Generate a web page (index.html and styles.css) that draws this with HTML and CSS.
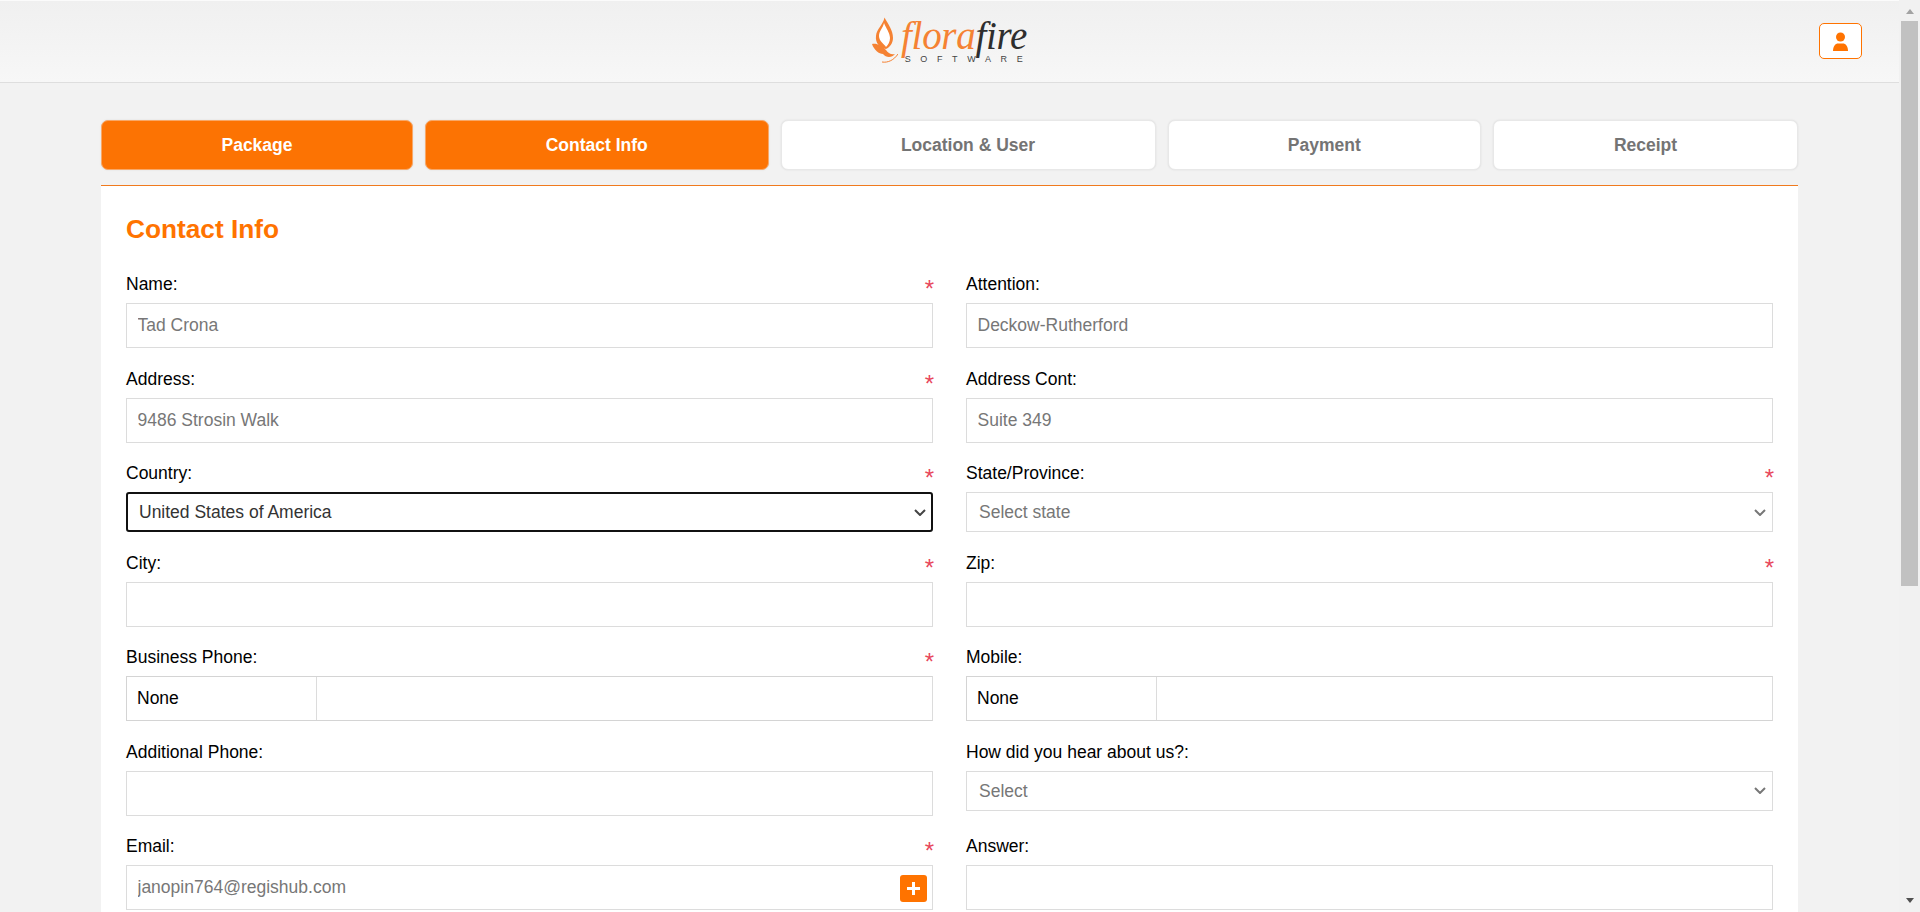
FILE: index.html
```html
<!DOCTYPE html>
<html>
<head>
<meta charset="utf-8" />
<title>Contact Info</title>
<link rel="stylesheet" href="styles.css">
</head>
<body>
<div class="page">
    <div class="header">
        <div class="logo">
            <svg class="flame" width="26" height="50" viewBox="0 0 26 50">
                <path fill="#f58233" d="M12.5 1.5C16 8 21 14 21 22C21 27 18 31 14 33C8 32 3 27 4 20C4.5 13 11 9 12.5 1.5Z" />
                <path fill="#fff" d="M12 7C14 12 18 17 18 22C18 26 16 29 14 31C12 28 7 25 7 20C7 15 11 12 12 7Z" />
                <path fill="#f58233" d="M0 28C5 27 10 30 14 34C16 37 19 39 23 38C20 42 14 42 11 38C7 38 2 34 0 28Z" />
                <path fill="none" stroke="#f58233" d="M10 46C16 47 22 44 26 38" />
            </svg>
            <div class="brand">
                <div class="brand-name"><span class="flora">flora</span><span class="fire">fire</span></div>
                <div class="brand-sub">SOFTWARE</div>
            </div>
        </div>
        <button class="user-btn" type="button">
            <svg width="17" height="19" viewBox="0 0 17 19">
                <circle cx="8.5" cy="5" r="4.5" fill="#ff7300" />
                <path fill="#ff7300" d="M1 19C1 14 3.5 11.5 6 11.5H11C13.5 11.5 16 14 16 19Z" />
            </svg>
        </button>
    </div>

    <div class="content">
        <div class="tabs">
            <div class="tab active">Package</div>
            <div class="tab active">Contact Info</div>
            <div class="tab">Location &amp; User</div>
            <div class="tab">Payment</div>
            <div class="tab">Receipt</div>
        </div>

        <div class="card">
            <h2 class="title">Contact Info</h2>
            <div class="form">
                <div class="field">
                    <div class="label"><span>Name:</span><span class="req">*</span></div>
                    <input class="input" type="text" value="Tad Crona">
                </div>
                <div class="field">
                    <div class="label"><span>Attention:</span></div>
                    <input class="input" type="text" value="Deckow-Rutherford">
                </div>
                <div class="field">
                    <div class="label"><span>Address:</span><span class="req">*</span></div>
                    <input class="input" type="text" value="9486 Strosin Walk">
                </div>
                <div class="field">
                    <div class="label"><span>Address Cont:</span></div>
                    <input class="input" type="text" value="Suite 349">
                </div>
                <div class="field">
                    <div class="label"><span>Country:</span><span class="req">*</span></div>
                    <select class="select focused"><option>United States of America</option></select>
                </div>
                <div class="field">
                    <div class="label"><span>State/Province:</span><span class="req">*</span></div>
                    <select class="select"><option>Select state</option></select>
                </div>
                <div class="field">
                    <div class="label"><span>City:</span><span class="req">*</span></div>
                    <input class="input" type="text">
                </div>
                <div class="field">
                    <div class="label"><span>Zip:</span><span class="req">*</span></div>
                    <input class="input" type="text">
                </div>
                <div class="field">
                    <div class="label"><span>Business Phone:</span><span class="req">*</span></div>
                    <div class="phone">
                        <div class="dial">None</div>
                        <input class="phone-num" type="text">
                    </div>
                </div>
                <div class="field">
                    <div class="label"><span>Mobile:</span></div>
                    <div class="phone">
                        <div class="dial">None</div>
                        <input class="phone-num" type="text">
                    </div>
                </div>
                <div class="field">
                    <div class="label"><span>Additional Phone:</span></div>
                    <input class="input" type="text">
                </div>
                <div class="field">
                    <div class="label"><span>How did you hear about us?:</span></div>
                    <select class="select"><option>Select</option></select>
                </div>
                <div class="field">
                    <div class="label"><span>Email:</span><span class="req">*</span></div>
                    <div class="email">
                        <input class="input" type="text" value="janopin764@regishub.com">
                        <div class="add-btn">
                            <svg width="13" height="13" viewBox="0 0 13 13">
                                <path fill="#fff" d="M5 0H8V5H13V8H8V13H5V8H0V5H5Z" />
                            </svg>
                        </div>
                    </div>
                </div>
                <div class="field">
                    <div class="label"><span>Answer:</span></div>
                    <input class="input" type="text">
                </div>
            </div>
        </div>
    </div>
</div>
<div class="scrollbar">
    <div class="arrow-up"></div>
    <div class="thumb"></div>
    <div class="arrow-down"></div>
</div>
</body>
</html>
```

FILE: styles.css
```css
*{ box-sizing:border-box; margin:0; padding:0; }
html,body{ height:100%; overflow:hidden; }
body{
    display:flex;
    background-color:#f2f2f2;
    font-family:"Liberation Sans", Arial, sans-serif;
    font-size:17.5px;
    color:#000;
}
.page{
    flex:1;
    min-width:0;
    height:912px;
    overflow:hidden;
}

/* header */
.header{
    height:83px;
    display:flex;
    justify-content:center;
    align-items:center;
    position:relative;
    background:linear-gradient(#f0f0f0, #f7f7f7);
    border-top:1px solid #fbfbfb;
    border-bottom:1px solid #dedede;
}
.logo{ display:flex; align-items:flex-start; margin-top:-2px; }
.flame{ margin-right:3px; margin-top:1px; }
.brand{ display:flex; flex-direction:column; align-items:center; }
.brand-name{
    font-family:"Liberation Serif", serif;
    font-style:italic;
    font-size:39px;
    line-height:42px;
    letter-spacing:-0.3px;
}
.flora{ color:#f58233; }
.fire{ color:#2e2e2e; }
.brand-sub{
    margin-top:-2px;
    font-size:9px;
    line-height:9px;
    letter-spacing:9.6px;
    margin-right:-9px;
    color:#444;
}
.user-btn{
    position:absolute;
    right:37px;
    top:22px;
    width:43px;
    height:36px;
    display:flex;
    align-items:center;
    justify-content:center;
    background:#fff;
    border:1px solid #ff7300;
    border-radius:5px;
}

/* tabs */
.content{ padding:37px 101px 0 101px; }
.tabs{
    display:grid;
    grid-template-columns:312px 343.5px 375px 313.5px 305px;
    column-gap:12px;
    height:50px;
}
.tab{
    display:flex;
    align-items:center;
    justify-content:center;
    background:#fff;
    border:1px solid #e8e8e8;
    border-radius:7px;
    box-shadow:0 0 2px rgba(0,0,0,0.1);
    font-size:17.5px;
    font-weight:bold;
    color:#747474;
}
.tab.active{
    background:#fc7303;
    border-color:#f8a868;
    color:#fff;
}

/* form */
.card{
    margin-top:15px;
    background:#fff;
    border-top:1px solid #f07a1e;
    padding:28px 25px 40px 25px;
}
.title{
    font-size:26.25px;
    line-height:30px;
    color:#ff7300;
    margin-bottom:27px;
}
.form{
    display:grid;
    grid-template-columns:1fr 1fr;
    column-gap:33px;
}
.field{ padding-bottom:17.5px; }
.label{
    display:flex;
    justify-content:space-between;
    align-items:flex-start;
    height:32px;
    padding-top:1px;
    line-height:24px;
}
.req{ color:#e8475c; font-size:24px; line-height:33px; margin-right:-1px; }
.input{
    display:block;
    width:100%;
    height:45px;
    padding:0 10.5px;
    background:#fff;
    border:1px solid #dcdcdc;
    border-radius:0;
    outline:none;
    font-family:inherit;
    font-size:17.5px;
    color:#777;
}
.select{
    display:block;
    width:100%;
    height:40px;
    padding:0 12px;
    appearance:none;
    background-color:#fff;
    background-image:url("data:image/svg+xml,%3Csvg xmlns='http://www.w3.org/2000/svg' width='12' height='7' viewBox='0 0 12 7'%3E%3Cpath fill='none' stroke='%23777' stroke-width='2' d='M1 1l5 5 5-5'/%3E%3C/svg%3E");
    background-repeat:no-repeat;
    background-position:right 6px center;
    border:1px solid #dcdcdc;
    border-radius:0;
    font-family:inherit;
    font-size:17.5px;
    color:#777;
}
.select.focused{
    border:2px solid #111;
    border-radius:3px;
    padding:0 11px;
    background-image:url("data:image/svg+xml,%3Csvg xmlns='http://www.w3.org/2000/svg' width='12' height='7' viewBox='0 0 12 7'%3E%3Cpath fill='none' stroke='%23444' stroke-width='2' d='M1 1l5 5 5-5'/%3E%3C/svg%3E");
    background-position:right 5px center;
    color:#333;
}
.phone{
    display:flex;
    height:45px;
    background:#fff;
    border:1px solid #d4d4d4;
    border-right-color:#dcdcdc;
}
.dial{
    width:190px;
    padding-left:10px;
    line-height:43px;
    border-right:1px solid #dcdcdc;
}
.phone-num{ flex:1; min-width:0; border:0; outline:none; }
.email{ position:relative; }
.add-btn{
    position:absolute;
    right:6px;
    top:10px;
    width:27px;
    height:27px;
    display:flex;
    align-items:center;
    justify-content:center;
    background:#ff7300;
    border-radius:3px;
}

/* scrollbar, drawn since the page itself does not scroll */
.scrollbar{
    flex:none;
    width:21px;
    height:912px;
    display:flex;
    flex-direction:column;
    align-items:center;
    background:#f1f1f1;
}
.arrow-up{
    margin-top:9px;
    width:0; height:0;
    border-left:4.5px solid transparent;
    border-right:4.5px solid transparent;
    border-bottom:5px solid #a3a3a3;
}
.thumb{
    margin-top:7px;
    width:17px;
    height:565px;
    background:#c1c1c1;
}
.arrow-down{
    margin-top:auto;
    margin-bottom:9px;
    width:0; height:0;
    border-left:4.5px solid transparent;
    border-right:4.5px solid transparent;
    border-top:5px solid #505050;
}
```
